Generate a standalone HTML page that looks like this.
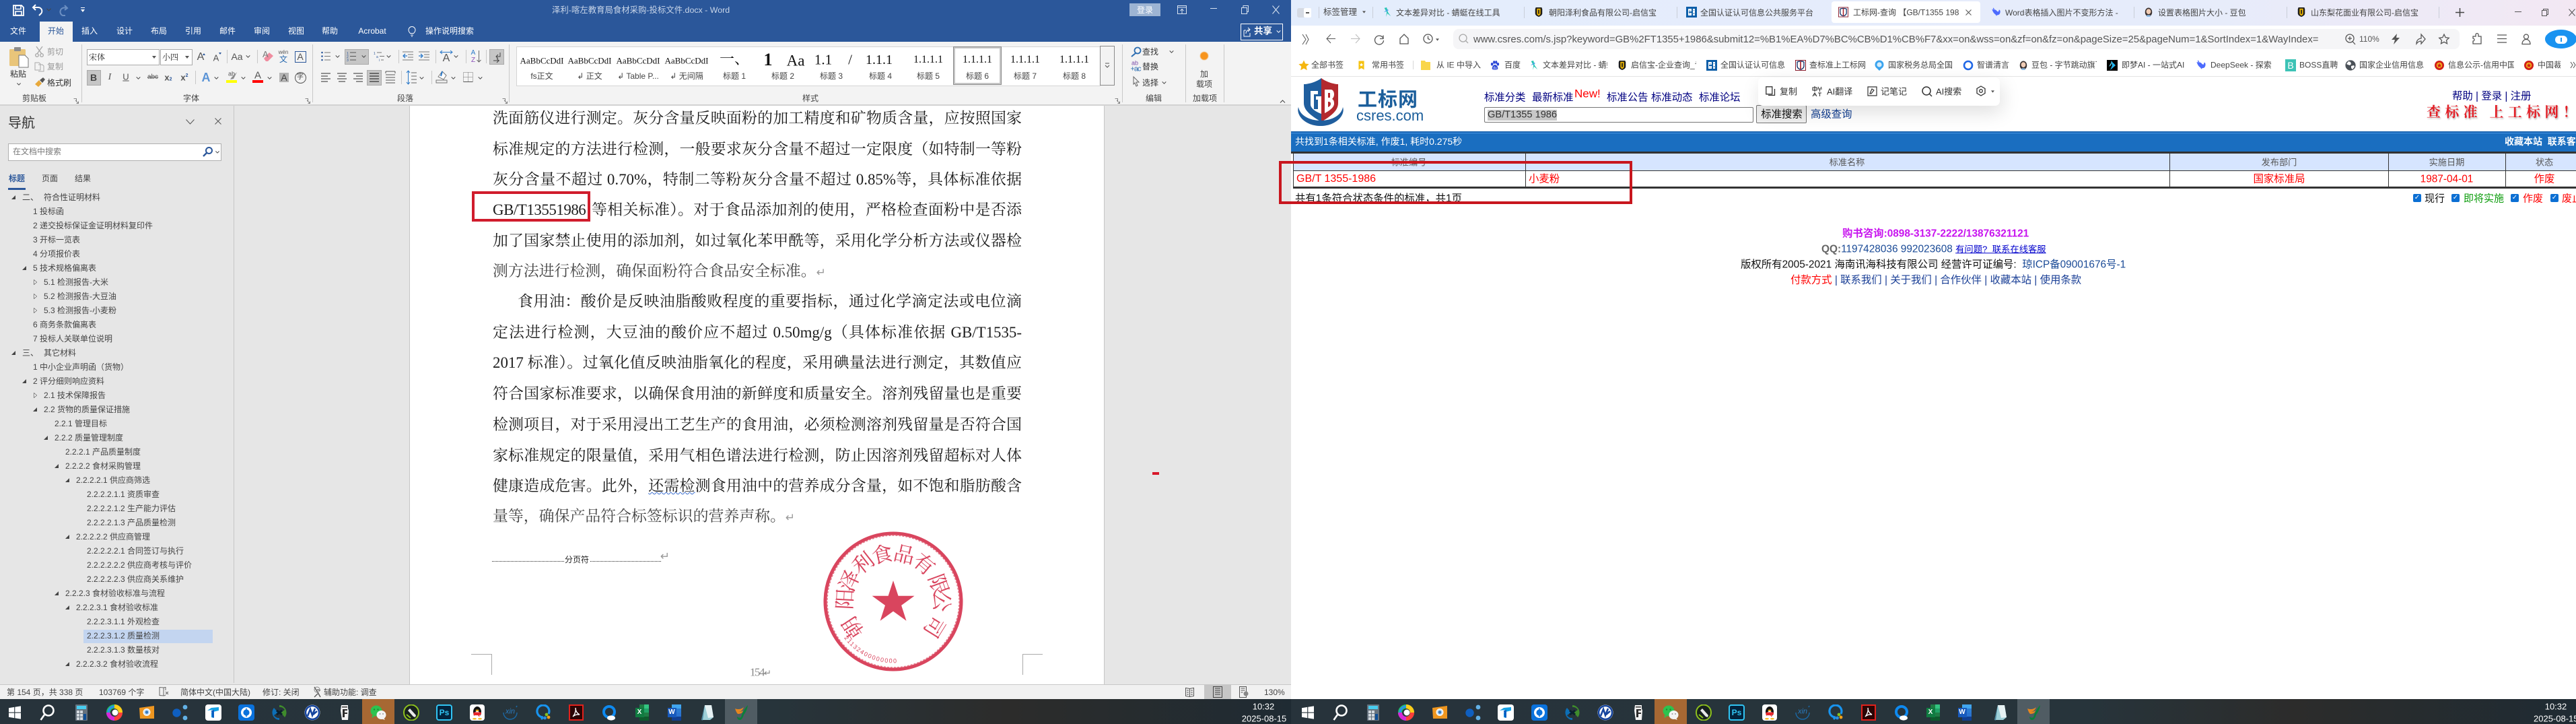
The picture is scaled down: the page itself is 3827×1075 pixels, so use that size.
<!DOCTYPE html>
<html lang="zh"><head><meta charset="utf-8"><title>Word and csres</title>
<style>
html,body{margin:0;padding:0;background:#fff}
#r{position:relative;width:3827px;height:1075px;overflow:hidden;background:#fff;font-family:"Liberation Sans","Noto Sans CJK SC",sans-serif;font-size:12px;color:#333}
.b{position:absolute}
.t{position:absolute;white-space:nowrap;line-height:1;transform:translateY(-50%)}
.c{position:absolute;white-space:nowrap;line-height:1;transform:translate(-50%,-50%)}
svg.i{position:absolute;overflow:visible}
.dl{position:absolute;left:732px;width:786px;white-space:nowrap;line-height:30px;height:30px;font-family:"Liberation Serif","Noto Serif CJK SC",serif;font-size:22.9px;color:#1c1c1c;text-align:justify;text-align-last:justify;transform:translateY(-50%)}
.dl.n{text-align:left;text-align-last:left;width:auto}
.m{color:#999;font-family:"DejaVu Sans",sans-serif;font-size:17px}
.n{color:#444}
.nt{position:absolute;white-space:nowrap;line-height:1;transform:translateY(-50%);font-size:12px;color:#444}
.tf{position:absolute;width:0;height:0;border-left:6px solid transparent;border-bottom:6px solid #444;transform:translateY(-50%)}
.to{position:absolute;width:5px;height:8px;transform:translateY(-50%)}
.w{color:#fff}
.sep{position:absolute;width:1px;background:#c8c8c8}
.lab{position:absolute;white-space:nowrap;line-height:1;transform:translate(-50%,-50%);font-size:12px;color:#444}
.pv{position:absolute;white-space:nowrap;line-height:1;transform:translate(-50%,-50%);font-family:"Liberation Serif","Noto Serif CJK SC",serif;color:#111;overflow:hidden}
.ar{position:absolute;width:5px;height:3px;transform:translate(-50%,-50%)}
.tab{position:absolute;white-space:nowrap;line-height:1;transform:translateY(-50%);color:#444;font-size:12px}
.tsep{position:absolute;top:10px;height:17px;width:1px;background:#c9ced8}
.bm{position:absolute;white-space:nowrap;line-height:1;transform:translateY(-50%);color:#444;font-size:12px;overflow:hidden;height:14px;padding-top:1px}
.nav{position:absolute;white-space:nowrap;line-height:1;transform:translateY(-50%);color:#000080;font-size:15.4px}
.th{position:absolute;white-space:nowrap;line-height:1;transform:translate(-50%,-50%);color:#555;font-size:13.2px}
.td{position:absolute;white-space:nowrap;line-height:1;transform:translate(-50%,-50%);color:#f00;font-size:15.4px}
.cb{position:absolute;top:288px;width:12px;height:12px;background:#0b6fd3;border-radius:2px;color:#fff;font-size:10px;line-height:12px;text-align:center;font-family:"DejaVu Sans",sans-serif}
.f{position:absolute;white-space:nowrap;line-height:1;transform:translateY(-50%);font-size:15.4px}
</style></head><body><div id="r">

<svg width="0" height="0" style="position:absolute">
<defs>
<symbol id="win" viewBox="0 0 24 24"><path d="M3 5.2l8.2-1.3V11.5H3zM12.3 3.7L21 2.4v9.1h-8.7zM3 12.6h8.2v7.5L3 18.8zM12.3 12.6H21v9l-8.7-1.3z" fill="#fff"/></symbol>
<symbol id="sr" viewBox="0 0 24 24"><circle cx="14" cy="9" r="7.5" fill="none" stroke="#fff" stroke-width="2.6"/><path d="M8.5 14.5L2.5 23" stroke="#fff" stroke-width="2.6" fill="none"/></symbol>
<symbol id="calc" viewBox="0 0 24 24"><rect x="3" width="18" height="24" rx="1" fill="#66727d"/><rect x="5" y="2" width="14" height="5" fill="#48cdf0"/><path d="M5 9h4v4H5zM10 9h4v4h-4zM5 14h4v4H5zM10 14h4v4h-4zM5 19h4v4H5zM10 19h4v4h-4z" fill="#d3d9de"/><rect x="15" y="14" width="4" height="9" fill="#0f4f96"/></symbol>
<symbol id="whl" viewBox="0 0 24 24"><circle cx="12" cy="12" r="9" fill="none" stroke="#21c16b" stroke-width="6"/><path d="M12 3a9 9 0 0 1 9 9" fill="none" stroke="#ffcc18" stroke-width="6"/><path d="M21 12a9 9 0 0 1-9 9" fill="none" stroke="#ff3f3a" stroke-width="6"/><path d="M12 21a9 9 0 0 1-9-9" fill="none" stroke="#d827d8" stroke-width="6"/><path d="M3 12a9 9 0 0 1 9-9" fill="none" stroke="#2a8df0" stroke-width="3"/><circle cx="13" cy="12" r="4.5" fill="#fff"/></symbol>
<symbol id="pho" viewBox="0 0 24 24"><path d="M1 5l22-3v19L2 21z" fill="#ee9620"/><circle cx="12" cy="11.5" r="5" fill="#cfe3f4" stroke="#fff"/><circle cx="12" cy="11.5" r="2.4" fill="#3a7dc0"/></symbol>
<symbol id="dts" viewBox="0 0 24 24"><circle cx="6.5" cy="12.5" r="6.2" fill="#0f5fc0"/><circle cx="19" cy="4" r="3.4" fill="#62b1e6"/><circle cx="19" cy="20" r="3.4" fill="#62b1e6"/></symbol>
<symbol id="tdo" viewBox="0 0 24 24"><rect width="24" height="24" rx="4" fill="#fff"/><path d="M3 9l8-1v4l-2 .5V19l3 1v-9l8-2V4L9 5z" fill="#14a2e6"/><path d="M9 9l4-1v12l-3-1.5z" fill="#0c5fc2"/></symbol>
<symbol id="rng" viewBox="0 0 24 24"><rect width="24" height="24" rx="4" fill="#0a72dc"/><circle cx="12" cy="12" r="6.3" fill="none" stroke="#fff" stroke-width="3.4"/><path d="M12 5.5v13" stroke="#0a72dc" stroke-width="1.4"/></symbol>
<symbol id="swr" viewBox="0 0 24 24"><path d="M12 1a11 11 0 0 1 8 18l-6-7 6-4a8 8 0 0 0-8-4z" fill="#3f8c2c"/><path d="M12 23A11 11 0 0 1 4 5l6 7-6 4a8 8 0 0 0 8 4z" fill="#0d6fb6"/><path d="M8 9l8 6M8 15l8-6" stroke="#0a1f2c" stroke-width="3"/></symbol>
<symbol id="nss" viewBox="0 0 24 24"><circle cx="12" cy="12" r="11.5" fill="#fff"/><circle cx="12" cy="12" r="10" fill="none" stroke="#15449e" stroke-width="2.5"/><path d="M5 17L9 7l3 9 4-10M13 15l6-5" stroke="#15449e" stroke-width="2.6" fill="none"/></symbol>
<symbol id="cup" viewBox="0 0 24 24"><path d="M7 1h10v5l1 3-1 14H8L6 9z" fill="#f3f3f3"/><path d="M9 7h7v2h-4v3h4v2h-4v5H9z" fill="#2b2b2b"/><path d="M8 3h8v1.5H8z" fill="#333"/></symbol>
<symbol id="wx" viewBox="0 0 24 24"><ellipse cx="9" cy="9.5" rx="8.5" ry="8" fill="#2dc34f"/><path d="M3 16l-.5 4 4-2.5z" fill="#2dc34f"/><circle cx="6" cy="7.5" r="1.2" fill="#1e8a36"/><circle cx="11.5" cy="7.5" r="1.2" fill="#1e8a36"/><ellipse cx="16.5" cy="15.5" rx="7" ry="6.5" fill="#f4f4f4"/><path d="M20 20l2 3-4.5-1.5z" fill="#f4f4f4"/><circle cx="14.5" cy="14" r="1" fill="#999"/><circle cx="19" cy="14" r="1" fill="#999"/></symbol>
<symbol id="pen" viewBox="0 0 24 24"><ellipse cx="12" cy="12" rx="11" ry="11.5" fill="#18211f" stroke="#8ec21d" stroke-width="2"/><path d="M7 9l3-3 9 10-1 3-3-1z" fill="#e9e9e9"/><path d="M5 15l6 5" stroke="#8ec21d" stroke-width="2"/></symbol>
<symbol id="ps" viewBox="0 0 24 24"><rect x="1" y="1" width="22" height="22" rx="3" fill="#03233d" stroke="#31c5f4" stroke-width="2"/></symbol>
<symbol id="qq" viewBox="0 0 24 24"><rect x="1" width="22" height="24" rx="4" fill="#fff"/><ellipse cx="12" cy="11" rx="6" ry="8" fill="#111"/><ellipse cx="12" cy="15" rx="4.2" ry="5.2" fill="#fff"/><path d="M6.6 11.5h10.8l.8 3-3 1.4v3l-2-2.8H6.5z" fill="#e8262a"/><ellipse cx="12" cy="8.8" rx="2.4" ry="1.2" fill="#f4b415"/><ellipse cx="8" cy="21.3" rx="3" ry="1.2" fill="#f4b415"/><ellipse cx="16" cy="21.3" rx="3" ry="1.2" fill="#f4b415"/></symbol>
<symbol id="xin" viewBox="0 0 24 24"><path d="M2 12a10 10 0 0 0 20 0" fill="none" stroke="#1a69a6" stroke-width="1.4"/><path d="M21 4l1-2" stroke="#1a69a6" stroke-width="1.6"/></symbol>
<symbol id="cht" viewBox="0 0 24 24"><path d="M12 19a9 9 0 1 1 8-5" fill="none" stroke="#1894ef" stroke-width="3.2"/><path d="M9 22l3-3" stroke="#1894ef" stroke-width="3"/><circle cx="17" cy="15" r="2.4" fill="#84c21f"/><circle cx="20" cy="19" r="2.4" fill="#f3a01a"/><circle cx="14.5" cy="20" r="2.4" fill="#2a8fe0"/></symbol>
<symbol id="adb" viewBox="0 0 24 24"><rect x="2" y="1" width="20" height="22" fill="#2b0505" stroke="#e2211c" stroke-width="2"/><path d="M7 18c3-3 5-9 4-13 0 4 2 8 6 10-4-.5-7 0-10 3z" fill="none" stroke="#fff" stroke-width="1.4"/></symbol>
<symbol id="blq" viewBox="0 0 24 24"><circle cx="12" cy="11" r="8" fill="none" stroke="#0e8af0" stroke-width="4"/><ellipse cx="15" cy="20" rx="6" ry="3.6" fill="#fff"/></symbol>
<symbol id="xl" viewBox="0 0 24 24"><path d="M8 0h14v24H8z" fill="#1f7c45"/><path d="M15 0h7v6h-7z" fill="#33c481"/><path d="M15 6h7v6h-7z" fill="#21a366"/><path d="M8 18h14v6H8z" fill="#0e5a2d"/><rect x="2" y="5" width="13" height="14" fill="#107c41"/></symbol>
<symbol id="wd" viewBox="0 0 24 24"><path d="M8 0h14v24H8z" fill="#2a73d0"/><path d="M8 0h14v6H8z" fill="#41a5ee"/><path d="M8 6h14v6H8z" fill="#2b7cd3"/><path d="M8 18h14v6H8z" fill="#103f91"/><rect x="2" y="5" width="13" height="14" fill="#185abd"/></symbol>
<symbol id="ntp" viewBox="0 0 24 24"><path d="M8 1h10l3 18-5 4H3z" fill="#9fd0d8"/><path d="M8 1h10l3 18-8 1z" fill="#e7f2f4"/><path d="M8 1L3 23l2 .6" fill="#4e8aa2"/></symbol>
<symbol id="ylw" viewBox="0 0 24 24"><path d="M3 6c4 2 10 1 13-2-2 5-5 7-9 7 3 0 6-.5 8-2-1 4-4 5-8 5-2-2-3-5-4-8z" fill="#e7861d"/><path d="M22 1c-1 7-4 12-6 14-1 4-3 8-6 8-3 0-4-3-4-5 2 2 4 2 6 1 1-5 5-13 10-18z" fill="#0b7f3a"/></symbol>
<symbol id="dfly" viewBox="0 0 16 16"><path d="M7 0l2 8 5 7-6-5-2 6 1-8-4-7z" fill="#25c4b4"/><path d="M9 3l-7 5 4-1 4-2z" fill="#4da6ea"/></symbol>
<symbol id="shd" viewBox="0 0 16 16"><path d="M3 0h10l1 3v7c0 3-3 5-6 6-3-1-6-3-6-6V3z" fill="#1d1d1d"/><path d="M5 2h6v8c0 2-1 3-3 4-2-1-3-2-3-4z" fill="#f1b800"/><path d="M7 4h2v7H7z" fill="#1d1d1d"/></symbol>
<symbol id="ccc" viewBox="0 0 16 16"><rect width="16" height="16" fill="#0c5ea8"/><path d="M3 3h5v4H4v2h4v4H3zM10 3h3v10h-3z" fill="#fff"/><path d="M5 5h1v1H5zM5 10h1v1H5zM11 5h1v1h-1zM11 9h1v2h-1z" fill="#0c5ea8"/></symbol>
<symbol id="gbi" viewBox="0 0 16 16"><rect x=".5" y=".5" width="15" height="15" fill="#fff" stroke="#8a1c2c"/><path d="M8 2c3 0 5 1 5 1v6c0 3-3 5-5 5s-5-2-5-5V3s2-1 5-1z" fill="none" stroke="#15356b" stroke-width="1.4"/><path d="M8 2v12" stroke="#a81e28" stroke-width="1.6"/></symbol>
<symbol id="gq" viewBox="0 0 16 16"><circle cx="8" cy="7" r="6.5" fill="#3aa4ef"/><circle cx="8" cy="7" r="3.6" fill="#d4ecfb"/><path d="M5 13h6l-3 3z" fill="#3aa4ef"/></symbol>
<symbol id="zp" viewBox="0 0 16 16"><circle cx="8" cy="8" r="6" fill="none" stroke="#1e66e6" stroke-width="2.6"/><path d="M4 9c3 2 6 1 8-3" stroke="#fff" stroke-width="1.6" fill="none"/></symbol>
<symbol id="dbi" viewBox="0 0 16 16"><ellipse cx="8" cy="8" rx="6" ry="7.5" fill="#3a3130"/><ellipse cx="8" cy="7" rx="4" ry="4.5" fill="#f1cdb6"/><path d="M5 13h6v3H5z" fill="#8fbde6"/></symbol>
<symbol id="jm" viewBox="0 0 16 16"><rect width="16" height="16" fill="#000"/><path d="M6 1l7 7-8 7 3-7z" fill="#22b5ef"/><path d="M6 8l-3 2 5-9z" fill="#6ddaef"/></symbol>
<symbol id="dsk" viewBox="0 0 16 16"><path d="M1 3c2 7 6 10 9 10 3 0 5-2 5-6 0-2-1-3-2-3l-1 3c-2 1-3-2-5-3C6 4 3 4 1 3z" fill="#4d6bfe"/><path d="M3 1c3 4 3 9 6 13" fill="none" stroke="#4d6bfe" stroke-width="1.4"/></symbol>
<symbol id="glb" viewBox="0 0 16 16"><circle cx="8" cy="8" r="7.6" fill="#4b5158"/><path d="M5 2l3 1 1 3-2 2-3-1-2-1zM9 9l4-1 1 2-3 4-2-2z" fill="#fff"/></symbol>
<symbol id="emb" viewBox="0 0 16 16"><circle cx="8" cy="8" r="7" fill="#d11f19"/><circle cx="8" cy="8" r="4.2" fill="#f2b51a"/><path d="M8 4.6l1 2.4 2.4.2-1.8 1.6.6 2.4L8 9.9 5.800 11.200l.6-2.400L4.600 7.200 7 7z" fill="#d11f19"/></symbol>
<symbol id="yst" viewBox="0 0 16 16"><path d="M8 .5l2.300 5 5.400.6-4 3.700 1.100 5.500L8 12.500l-4.800 2.800 1.100-5.500-4-3.700 5.400-.6z" fill="#f5b60f"/></symbol>
<symbol id="ybk" viewBox="0 0 16 16"><path d="M3 0h10v16l-5-3-5 3z" fill="#f5c211"/><path d="M8 3.500l1 2.200 2.300.2-1.700 1.500.5 2.300L8 8.600 5.900 9.700l.5-2.300L4.700 5.900 7 5.700z" fill="#fff"/></symbol>
<symbol id="fld" viewBox="0 0 16 16"><path d="M1 1h6l1 2h7v12H1z" fill="#f9d649"/></symbol>
<symbol id="bdu" viewBox="0 0 16 16"><ellipse cx="3" cy="6" rx="2" ry="2.600" fill="#2a46d6"/><ellipse cx="6.500" cy="2.800" rx="1.800" ry="2.600" fill="#2a46d6"/><ellipse cx="10" cy="2.800" rx="1.800" ry="2.600" fill="#2a46d6"/><ellipse cx="13" cy="6" rx="2" ry="2.600" fill="#2a46d6"/><path d="M8 7c3 0 5 4 5 6s-2 2.500-5 2.500S3 15 3 13s2-6 5-6z" fill="#2a46d6"/><text x="8" y="14" font-size="6" text-anchor="middle" fill="#fff" font-family="Liberation Sans">du</text></symbol>
<symbol id="tri" viewBox="0 0 5 8"><path d="M.5.5l4 3.500-4 3.500z" fill="#fff" stroke="#666" stroke-width=".8"/></symbol>
<symbol id="dn" viewBox="0 0 8 5"><path d="M.5.500L4 4 7.500.500" fill="none" stroke="#444" stroke-width="1.200"/></symbol>
<symbol id="dnb" viewBox="0 0 6 4"><path d="M0 0h6L3 4z" fill="#555"/></symbol>
<symbol id="lf" viewBox="0 0 8 8"><path d="M.5.500h4v4M7.500 7.500L3 3M7.500 4.500v3h-3" fill="none" stroke="#666" stroke-width=".8"/></symbol>
<symbol id="al" viewBox="0 0 16 16"><path d="M1 2h14M1 6h10M1 10h14M1 14h10" stroke="#555" stroke-width="1.200" fill="none"/></symbol>
<symbol id="ac" viewBox="0 0 16 16"><path d="M1 2h14M3 6h10M1 10h14M3 14h10" stroke="#555" stroke-width="1.200" fill="none"/></symbol>
<symbol id="ar" viewBox="0 0 16 16"><path d="M1 2h14M5 6h10M1 10h14M5 14h10" stroke="#555" stroke-width="1.200" fill="none"/></symbol>
<symbol id="aj" viewBox="0 0 16 16"><path d="M1 2h14M1 6h14M1 10h14M1 14h14" stroke="#333" stroke-width="1.200" fill="none"/></symbol>
</defs>
</svg>

<!-- WORD title + tabs -->
<div class="b" style="left:0;top:0;width:1918px;height:62px;background:#2b579a"></div>
<svg class="i" style="left:19px;top:7px" width="17" height="17" viewBox="0 0 17 17"><path d="M1 1h12l3 3v12H1z" fill="none" stroke="#fff" stroke-width="1.800"/><path d="M4 1.500h8v5H4zM4 10h9v5.500H4z" fill="none" stroke="#fff" stroke-width="1.600"/></svg>
<svg class="i" style="left:48px;top:6px" width="16" height="18" viewBox="0 0 16 18"><path d="M5 1L1 5l4 4M1 5h8a5.500 5.500 0 0 1 3 10l-2 2" fill="none" stroke="#fff" stroke-width="2"/></svg>
<svg class="i" style="left:69px;top:12px" width="7" height="5"><use href="#dn"/></svg>
<svg class="i" style="left:87px;top:7px" width="15" height="17" viewBox="0 0 15 17"><path d="M9 1l4 4-4 3M11 5a6 6 0 1 0-5 11h4" fill="none" stroke="#6b8fc2" stroke-width="2"/></svg>
<div class="b" style="left:120px;top:11px;width:6px;height:1px;background:#fff"></div>
<svg class="i" style="left:120px;top:14px" width="6" height="4" viewBox="0 0 6 4"><path d="M0 0h6L3 4z" fill="#fff"/></svg>
<div class="t" style="left:820px;top:15px;color:#c9d6e9;font-size:12.400px">泽利-喀左教育局食材采购-投标文件.docx  -  Word</div>
<div class="b" style="left:1678px;top:5px;width:46px;height:19px;background:#9db4d3"></div>
<div class="c" style="left:1701px;top:15px;color:#fff;font-size:12px">登录</div>
<svg class="i" style="left:1749px;top:8px" width="14" height="13" viewBox="0 0 14 13"><path d="M.5.500h13v12H.5zM.5 3h13M7 12V6M4.500 8L7 5.500 9.500 8" fill="none" stroke="#d9e3f0"/></svg>
<div class="b" style="left:1798px;top:12px;width:10px;height:1px;background:#d9e3f0"></div>
<svg class="i" style="left:1844px;top:8px" width="11" height="13" viewBox="0 0 11 13"><path d="M.5 3.500h8v9h-8zM3 3V.5h7.500v9H9" fill="none" stroke="#d9e3f0"/></svg>
<svg class="i" style="left:1890px;top:8px" width="11" height="13" viewBox="0 0 11 13"><path d="M.5.500l10 12M10.500.500L.5 12.500" fill="none" stroke="#d9e3f0"/></svg>

<div class="b" style="left:59px;top:32px;width:49px;height:30px;background:#f3f3f3"></div>
<div class="c w" style="left:27px;top:46px">文件</div>
<div class="c" style="left:83px;top:46px;color:#2b579a">开始</div>
<div class="c w" style="left:133px;top:46px">插入</div>
<div class="c w" style="left:185px;top:46px">设计</div>
<div class="c w" style="left:236px;top:46px">布局</div>
<div class="c w" style="left:287px;top:46px">引用</div>
<div class="c w" style="left:338px;top:46px">邮件</div>
<div class="c w" style="left:389px;top:46px">审阅</div>
<div class="c w" style="left:440px;top:46px">视图</div>
<div class="c w" style="left:490px;top:46px">帮助</div>
<div class="c w" style="left:553px;top:46px">Acrobat</div>
<svg class="i" style="left:606px;top:38px" width="12" height="17" viewBox="0 0 12 17"><path d="M3.500 11.500C2 10 1 8.500 1 6.500a5 5 0 0 1 10 0c0 2-1 3.500-2.500 5zM4 14h4M5 16h2" fill="none" stroke="#fff"/></svg>
<div class="t w" style="left:632px;top:46px">操作说明搜索</div>
<div class="b" style="left:1843px;top:35px;width:61px;height:23px;border:1px solid #fff"></div>
<svg class="i" style="left:1847px;top:40px" width="12" height="15" viewBox="0 0 12 15"><path d="M1 5h3M1 5v9h9V9M4 10c0-4 3-6 6-6M7 1l3 3-3 3" fill="none" stroke="#fff"/></svg>
<div class="t w" style="left:1863px;top:46px;font-weight:bold;font-size:13.500px">共享</div>
<svg class="i" style="left:1896px;top:45px" width="7" height="4" viewBox="0 0 8 5"><path d="M.5.500L4 4 7.500.500" fill="none" stroke="#fff" stroke-width="1.200"/></svg>

<!-- Ribbon -->
<div class="b" style="left:0;top:62px;width:1918px;height:93px;background:#f3f3f3"></div>
<div class="b" style="left:0;top:155px;width:1918px;height:2px;background:#d2d2d2"></div>
<div class="sep" style="left:121px;top:66px;height:86px"></div>
<div class="sep" style="left:464px;top:66px;height:86px"></div>
<div class="sep" style="left:756px;top:66px;height:86px"></div>
<div class="sep" style="left:1667px;top:66px;height:86px"></div>
<div class="sep" style="left:1761px;top:66px;height:86px"></div>
<div class="sep" style="left:1818px;top:66px;height:86px"></div>

<svg class="i" style="left:14px;top:69px" width="30" height="31" viewBox="0 0 30 31"><rect y="4" width="24" height="25" rx="1.500" fill="#e9c57a"/><rect x="7" y="1" width="10" height="6" rx="1" fill="#8c8c8c"/><path d="M14 13h9l5 5v13H14z" fill="#fff" stroke="#777"/></svg>
<div class="c" style="left:27px;top:110px;color:#333">粘贴</div>
<svg class="i" style="left:25px;top:123px" width="6" height="4"><use href="#dn"/></svg>
<svg class="i" style="left:52px;top:68px" width="13" height="17" viewBox="0 0 13 17"><path d="M2 1l8 11M11 1L3 12" stroke="#aaa" stroke-width="1.400" fill="none"/><circle cx="3" cy="14" r="2.300" fill="none" stroke="#aaa" stroke-width="1.400"/><circle cx="10" cy="14" r="2.300" fill="none" stroke="#aaa" stroke-width="1.400"/></svg>
<div class="t" style="left:70px;top:77px;color:#999">剪切</div>
<svg class="i" style="left:51px;top:92px" width="15" height="15" viewBox="0 0 15 15"><path d="M1 1h6l2 2v9H1zM6 4h6l2 2v8H6" fill="#f3f3f3" stroke="#aaa"/></svg>
<div class="t" style="left:70px;top:99px;color:#999">复制</div>
<svg class="i" style="left:51px;top:115px" width="16" height="15" viewBox="0 0 16 15"><path d="M1 10l6-6 4 5-5 5z" fill="#e8a93c"/><path d="M8 4l5-4 3 3-4 5z" fill="#555"/></svg>
<div class="t" style="left:70px;top:123px;color:#333">格式刷</div>
<div class="lab" style="left:51px;top:146px">剪贴板</div>
<svg class="i" style="left:109px;top:146px" width="8" height="8"><use href="#lf"/></svg>

<div class="b" style="left:129px;top:73px;width:106px;height:22px;background:#fff;border:1px solid #ababab"></div>
<div class="t" style="left:132px;top:85px;color:#222;font-family:'Liberation Serif','Noto Serif CJK SC',serif">宋体</div>
<svg class="i" style="left:226px;top:83px" width="6" height="4"><use href="#dnb"/></svg>
<div class="b" style="left:238px;top:73px;width:46px;height:22px;background:#fff;border:1px solid #ababab"></div>
<div class="t" style="left:241px;top:85px;color:#222;font-family:'Liberation Serif','Noto Serif CJK SC',serif">小四</div>
<svg class="i" style="left:275px;top:83px" width="6" height="4"><use href="#dnb"/></svg>
<div class="c" style="left:298px;top:85px;font-size:16px;color:#555">A</div>
<div class="b" style="left:301px;top:77px;width:0;height:0;border:2px solid transparent;border-bottom:3px solid #2b579a"></div>
<div class="c" style="left:321px;top:86px;font-size:13px;color:#555">A</div>
<div class="b" style="left:325px;top:78px;width:0;height:0;border:2px solid transparent;border-top:3px solid #2b579a"></div>
<div class="sep" style="left:337px;top:74px;height:20px"></div>
<div class="c" style="left:352px;top:84px;font-size:14px;color:#555">Aa</div>
<svg class="i" style="left:365px;top:82px" width="7" height="4"><use href="#dn"/></svg>
<div class="sep" style="left:382px;top:74px;height:20px"></div>
<svg class="i" style="left:389px;top:75px" width="18" height="18" viewBox="0 0 18 18"><path d="M3 12L11 3l6 5-8 8H6z" fill="#f08da0"/><text x="1" y="10" font-size="13" fill="#777" font-family="Liberation Sans">A</text></svg>
<div class="c" style="left:421px;top:78px;font-size:8px;color:#555">wén</div>
<div class="c" style="left:421px;top:88px;font-size:12px;color:#2b6cb0">文</div>
<div class="b" style="left:438px;top:76px;width:15px;height:15px;border:1px solid #2b579a"></div>
<div class="c" style="left:446px;top:84px;font-size:14px;color:#555">A</div>

<div class="b" style="left:129px;top:104px;width:21px;height:23px;background:#c6c6c6;box-sizing:border-box;border:1px solid #aaa"></div>
<div class="c" style="left:139px;top:115px;font-weight:bold;font-size:14px;color:#444">B</div>
<div class="c" style="left:163px;top:115px;font-style:italic;font-size:14px;color:#555;font-family:'Liberation Serif'">I</div>
<div class="c" style="left:187px;top:114px;font-size:13px;color:#555;text-decoration:underline">U</div>
<svg class="i" style="left:202px;top:114px" width="7" height="4"><use href="#dn"/></svg>
<div class="c" style="left:227px;top:115px;font-size:10px;color:#555;text-decoration:line-through">abc</div>
<div class="c" style="left:250px;top:115px;font-size:13px;color:#555;font-weight:bold">x<span style="font-size:7px;color:#2b579a">2</span></div>
<div class="c" style="left:274px;top:115px;font-size:13px;color:#555;font-weight:bold">x<sup style="font-size:7px;color:#2b579a;line-height:0">2</sup></div>
<div class="sep" style="left:290px;top:105px;height:20px"></div>
<div class="c" style="left:306px;top:115px;font-size:18px;color:#5b94d6;font-weight:bold">A</div>
<svg class="i" style="left:318px;top:114px" width="7" height="4"><use href="#dn"/></svg>
<div class="c" style="left:344px;top:110px;font-size:9px;color:#555">ab</div>
<svg class="i" style="left:340px;top:105px" width="14" height="14" viewBox="0 0 14 14"><path d="M2 13l2-3 8-8-5 10z" fill="#8c8c8c"/></svg>
<div class="b" style="left:336px;top:119px;width:16px;height:4px;background:#ffff00"></div>
<svg class="i" style="left:358px;top:114px" width="7" height="4"><use href="#dn"/></svg>
<div class="c" style="left:383px;top:112px;font-size:15px;color:#555">A</div>
<div class="b" style="left:375px;top:119px;width:16px;height:4px;background:#ff0000"></div>
<svg class="i" style="left:397px;top:114px" width="7" height="4"><use href="#dn"/></svg>
<div class="b" style="left:415px;top:108px;width:14px;height:14px;background:#b4b4b4"></div>
<div class="c" style="left:422px;top:115px;font-size:14px;color:#444">A</div>
<div class="b" style="left:438px;top:107px;width:15px;height:15px;border:1px solid #555;border-radius:50%"></div>
<div class="c" style="left:446px;top:115px;font-size:10px;color:#444">字</div>
<div class="lab" style="left:284px;top:146px">字体</div>
<svg class="i" style="left:453px;top:146px" width="8" height="8"><use href="#lf"/></svg>

<svg class="i" style="left:477px;top:76px" width="14" height="15" viewBox="0 0 14 15"><path d="M5 2h9M5 7.500h9M5 13h9" stroke="#777"/><circle cx="1.500" cy="2" r="1.300" fill="#2b579a"/><circle cx="1.500" cy="7.500" r="1.300" fill="#2b579a"/><circle cx="1.500" cy="13" r="1.300" fill="#2b579a"/></svg>
<svg class="i" style="left:498px;top:82px" width="7" height="4"><use href="#dn"/></svg>
<div class="b" style="left:512px;top:73px;width:36px;height:23px;background:#c6c6c6;box-sizing:border-box;border:1px solid #aaa"></div>
<svg class="i" style="left:515px;top:76px" width="14" height="15" viewBox="0 0 14 15"><path d="M5 2h9M5 7.500h9M5 13h9" stroke="#555"/><text x="0" y="5" font-size="5" fill="#2b579a">1</text><text x="0" y="10" font-size="5" fill="#2b579a">2</text><text x="0" y="15" font-size="5" fill="#2b579a">3</text></svg>
<svg class="i" style="left:537px;top:82px" width="7" height="4"><use href="#dn"/></svg>
<svg class="i" style="left:555px;top:76px" width="16" height="15" viewBox="0 0 16 15"><path d="M5 2h7M9 7.500h7M11 13h4" stroke="#777"/><text x="0" y="5" font-size="5" fill="#2b579a">1</text><text x="4" y="10" font-size="5" fill="#2b579a">a</text><text x="8" y="15" font-size="5" fill="#2b579a">i</text></svg>
<svg class="i" style="left:574px;top:82px" width="7" height="4"><use href="#dn"/></svg>
<div class="sep" style="left:592px;top:74px;height:20px"></div>
<svg class="i" style="left:598px;top:76px" width="16" height="15" viewBox="0 0 16 15"><path d="M0 1h16M8 5h8M8 9h8M0 13h16" stroke="#777"/><path d="M7 7H1M4 4L1 7l3 3" stroke="#2b79c9" stroke-width="1.300" fill="none"/></svg>
<svg class="i" style="left:622px;top:76px" width="16" height="15" viewBox="0 0 16 15"><path d="M0 1h16M8 5h8M8 9h8M0 13h16" stroke="#777"/><path d="M0 7h6M3 4l3 3-3 3" stroke="#2b79c9" stroke-width="1.300" fill="none"/></svg>
<div class="sep" style="left:647px;top:74px;height:20px"></div>
<div class="c" style="left:663px;top:87px;font-size:16px;color:#555">A</div>
<svg class="i" style="left:653px;top:74px" width="20" height="7" viewBox="0 0 20 7"><path d="M1 3.500h18M4 1L1 3.500 4 6M16 1l3 2.500L16 6" stroke="#2b79c9" fill="none"/></svg>
<svg class="i" style="left:674px;top:82px" width="7" height="4"><use href="#dn"/></svg>
<div class="sep" style="left:692px;top:74px;height:20px"></div>
<div class="c" style="left:703px;top:79px;font-size:10px;color:#2b79c9">A</div>
<div class="c" style="left:703px;top:90px;font-size:10px;color:#8a4fb8">Z</div>
<svg class="i" style="left:708px;top:75px" width="7" height="18" viewBox="0 0 7 18"><path d="M3.500 0v17M.5 14l3 3 3-3" stroke="#666" fill="none"/></svg>
<div class="sep" style="left:722px;top:74px;height:20px"></div>
<div class="b" style="left:727px;top:73px;width:22px;height:23px;background:#c6c6c6;box-sizing:border-box;border:1px solid #aaa"></div>
<svg class="i" style="left:732px;top:76px" width="12" height="17" viewBox="0 0 12 17"><path d="M11 2v6H5M8 5L5 8l3 3M1 14h9M6 11l3 3-3 3" stroke="#444" fill="none"/></svg>
<svg class="i" style="left:476px;top:107px" width="16" height="16"><use href="#al"/></svg>
<svg class="i" style="left:500px;top:107px" width="16" height="16"><use href="#ac"/></svg>
<svg class="i" style="left:524px;top:107px" width="16" height="16"><use href="#ar"/></svg>
<div class="b" style="left:545px;top:104px;width:22px;height:23px;background:#c6c6c6;box-sizing:border-box;border:1px solid #aaa"></div>
<svg class="i" style="left:548px;top:107px" width="16" height="16"><use href="#aj"/></svg>
<svg class="i" style="left:572px;top:105px" width="16" height="20" viewBox="0 0 16 20"><path d="M1 6h14M1 10h14M1 14h14M1 18h14M1 1h14M1 1v3M15 1v3" stroke="#555" fill="none"/></svg>
<div class="sep" style="left:596px;top:105px;height:20px"></div>
<svg class="i" style="left:603px;top:104px" width="16" height="22" viewBox="0 0 16 22"><path d="M8 4h8M8 9h8M8 14h8M8 19h8" stroke="#666"/><path d="M3.500 1v20M1 4l2.500-3L6 4M1 18l2.500 3L6 18" stroke="#2b79c9" fill="none"/></svg>
<svg class="i" style="left:623px;top:114px" width="7" height="4"><use href="#dn"/></svg>
<div class="sep" style="left:641px;top:105px;height:20px"></div>
<svg class="i" style="left:648px;top:104px" width="17" height="20" viewBox="0 0 17 20"><path d="M3 10l6-8 6 6-4 6z" fill="#fff" stroke="#777"/><path d="M9 2l-2 7" stroke="#2b79c9" stroke-width="2"/><rect y="15" width="16" height="4" fill="#eee" stroke="#777"/></svg>
<svg class="i" style="left:670px;top:114px" width="7" height="4"><use href="#dn"/></svg>
<svg class="i" style="left:688px;top:107px" width="15" height="15" viewBox="0 0 15 15"><path d="M.5.500h14v14H.5zM7.500.500v14M.5 7.500h14" stroke="#777" stroke-dasharray="1 1" fill="none"/><path d="M.5 14.500h14" stroke="#555"/></svg>
<svg class="i" style="left:710px;top:114px" width="7" height="4"><use href="#dn"/></svg>
<div class="lab" style="left:602px;top:146px">段落</div>
<svg class="i" style="left:746px;top:146px" width="8" height="8"><use href="#lf"/></svg>

<!-- styles gallery -->
<div class="b" style="left:767px;top:69px;width:867px;height:57px;background:#fff;border-top:1px solid #d4d4d4;border-bottom:1px solid #d4d4d4;border-left:1px solid #d4d4d4"></div>
<div class="b" style="left:1634px;top:68px;width:22px;height:59px;box-sizing:border-box;border:1px solid #8a8a8a;background:#f3f3f3"></div>
<svg class="i" style="left:1641px;top:93px" width="8" height="10" viewBox="0 0 8 10"><path d="M1 1h6M1 4l3 3 3-3" stroke="#555" fill="none"/></svg>
<div class="b" style="left:1416px;top:69px;width:72px;height:57px;box-sizing:border-box;border:3px solid #c6c6c6;outline:1px solid #8a8a8a;outline-offset:-1px"></div>
<div class="pv" style="left:805px;top:90px;font-size:13px">AaBbCcDdI</div>
<div class="pv" style="left:876px;top:90px;font-size:13px">AaBbCcDdI</div>
<div class="pv" style="left:948px;top:90px;font-size:13px">AaBbCcDdI</div>
<div class="pv" style="left:1020px;top:90px;font-size:13px">AaBbCcDdI</div>
<div class="pv" style="left:1091px;top:88px;font-size:22px">一、</div>
<div class="pv" style="left:1141px;top:89px;font-size:26px;font-weight:bold">1</div>
<div class="pv" style="left:1182px;top:90px;font-size:23px">Aa</div>
<div class="pv" style="left:1223px;top:89px;font-size:21px">1.1</div>
<div class="pv" style="left:1263px;top:89px;font-size:21px">/</div>
<div class="pv" style="left:1306px;top:89px;font-size:20px">1.1.1</div>
<div class="pv" style="left:1379px;top:89px;font-size:16px">1.1.1.1</div>
<div class="pv" style="left:1452px;top:89px;font-size:16px">1.1.1.1</div>
<div class="pv" style="left:1523px;top:89px;font-size:16px">1.1.1.1</div>
<div class="pv" style="left:1596px;top:89px;font-size:16px">1.1.1.1</div>
<div class="lab" style="left:805px;top:113px">fs正文</div>
<div class="lab" style="left:876px;top:113px">↲ 正文</div>
<div class="lab" style="left:948px;top:113px">↲ Table P...</div>
<div class="lab" style="left:1020px;top:113px">↲ 无间隔</div>
<div class="lab" style="left:1091px;top:113px">标题 1</div>
<div class="lab" style="left:1163px;top:113px">标题 2</div>
<div class="lab" style="left:1235px;top:113px">标题 3</div>
<div class="lab" style="left:1308px;top:113px">标题 4</div>
<div class="lab" style="left:1379px;top:113px">标题 5</div>
<div class="lab" style="left:1452px;top:113px">标题 6</div>
<div class="lab" style="left:1523px;top:113px">标题 7</div>
<div class="lab" style="left:1596px;top:113px">标题 8</div>
<div class="lab" style="left:1204px;top:146px">样式</div>
<svg class="i" style="left:1656px;top:146px" width="8" height="8"><use href="#lf"/></svg>

<!-- editing -->
<svg class="i" style="left:1680px;top:69px" width="16" height="16" viewBox="0 0 16 16"><circle cx="10" cy="6" r="4.500" fill="none" stroke="#2b6cb0" stroke-width="1.800"/><path d="M7 10l-6 5" stroke="#2b6cb0" stroke-width="2"/></svg>
<div class="t" style="left:1697px;top:77px;color:#333">查找</div>
<svg class="i" style="left:1737px;top:75px" width="7" height="4"><use href="#dn"/></svg>
<div class="c" style="left:1686px;top:94px;font-size:9px;color:#7a4ba8">ab</div>
<div class="c" style="left:1687px;top:103px;font-size:11px;color:#2b6cb0;letter-spacing:-1px">+ac</div>
<div class="t" style="left:1697px;top:99px;color:#333">替换</div>
<svg class="i" style="left:1683px;top:113px" width="10" height="16" viewBox="0 0 10 16"><path d="M1 1l8 8H5l2 5-2 1-2-5-2 2z" fill="#f3f3f3" stroke="#666"/></svg>
<div class="t" style="left:1697px;top:123px;color:#333">选择</div>
<svg class="i" style="left:1726px;top:121px" width="7" height="4"><use href="#dn"/></svg>
<div class="lab" style="left:1714px;top:146px">编辑</div>
<div class="b" style="left:1783px;top:77px;width:12px;height:12px;border-radius:50%;background:#f7941d;filter:blur(.6px)"></div>
<div class="lab" style="left:1789px;top:110px">加</div>
<div class="lab" style="left:1789px;top:125px">载项</div>
<div class="lab" style="left:1790px;top:146px">加载项</div>
<svg class="i" style="left:1901px;top:148px" width="9" height="5" viewBox="0 0 8 5"><path d="M.5 4.500L4 1l3.500 3.500" fill="none" stroke="#444"/></svg>

<!-- Word body -->
<div class="b" style="left:0;top:157px;width:1918px;height:859px;background:#e6e6e6"></div>
<div class="b" style="left:347px;top:157px;width:1px;height:857px;background:#c6c6c6"></div>
<div class="b" style="left:608px;top:157px;width:1033px;height:859px;background:#fff;border-left:1px solid #c6c6c6;border-right:1px solid #c6c6c6;box-sizing:border-box"></div>

<!-- nav pane -->
<div class="t" style="left:12px;top:183px;font-size:20px;color:#333">导航</div>
<svg class="i" style="left:276px;top:177px" width="13" height="8" viewBox="0 0 13 8"><path d="M.5.500L6.500 7l6-6.500" fill="none" stroke="#555"/></svg>
<svg class="i" style="left:319px;top:175px" width="10" height="10" viewBox="0 0 10 10"><path d="M.5.500l9 9M9.500.500l-9 9" fill="none" stroke="#555"/></svg>
<div class="b" style="left:12px;top:213px;width:317px;height:26px;box-sizing:border-box;background:#fff;border:1px solid #b0b0b0"></div>
<div class="t" style="left:19px;top:225px;color:#7a7a7a">在文档中搜索</div>
<svg class="i" style="left:301px;top:218px" width="15" height="15" viewBox="0 0 15 15"><circle cx="9.500" cy="5.500" r="4.500" fill="none" stroke="#2b579a" stroke-width="2"/><path d="M6 9l-5 5" stroke="#2b579a" stroke-width="2.400"/></svg>
<svg class="i" style="left:320px;top:224px" width="6" height="4"><use href="#dn"/></svg>
<div class="t" style="left:13px;top:265px;color:#2b579a;font-weight:bold">标题</div>
<div class="t" style="left:62px;top:265px;color:#444">页面</div>
<div class="t" style="left:111px;top:265px;color:#444">结果</div>
<div class="b" style="left:12px;top:279px;width:26px;height:3px;background:#2b579a"></div>

<div class="b" style="left:124px;top:935px;width:192px;height:20px;background:#c3d5f0"></div>

<span class="tf" style="left:17px;top:293px"></span><div class="nt" style="left:33px;top:293px">二、<span style="margin-left:8px">符合性证明材料</span></div>
<div class="nt" style="left:49px;top:314px">1 投标函</div>
<div class="nt" style="left:49px;top:335px">2 递交投标保证金证明材料复印件</div>
<div class="nt" style="left:49px;top:356px">3 开标一览表</div>
<div class="nt" style="left:49px;top:377px">4 分项报价表</div>
<span class="tf" style="left:33px;top:398px"></span><div class="nt" style="left:49px;top:398px">5 技术规格偏离表</div>
<svg class="to" style="left:50px;top:419px"><use href="#tri"/></svg><div class="nt" style="left:65px;top:419px">5.1  检测报告-大米</div>
<svg class="to" style="left:50px;top:440px"><use href="#tri"/></svg><div class="nt" style="left:65px;top:440px">5.2  检测报告-大豆油</div>
<svg class="to" style="left:50px;top:461px"><use href="#tri"/></svg><div class="nt" style="left:65px;top:461px">5.3  检测报告-小麦粉</div>
<div class="nt" style="left:49px;top:482px">6 商务条款偏离表</div>
<div class="nt" style="left:49px;top:503px">7 投标人关联单位说明</div>
<span class="tf" style="left:17px;top:524px"></span><div class="nt" style="left:33px;top:524px">三、<span style="margin-left:8px">其它材料</span></div>
<div class="nt" style="left:49px;top:545px">1 中小企业声明函（货物）</div>
<span class="tf" style="left:33px;top:566px"></span><div class="nt" style="left:49px;top:566px">2 评分细则响应资料</div>
<svg class="to" style="left:50px;top:587px"><use href="#tri"/></svg><div class="nt" style="left:65px;top:587px">2.1  技术保障报告</div>
<span class="tf" style="left:49px;top:608px"></span><div class="nt" style="left:65px;top:608px">2.2  货物的质量保证措施</div>
<div class="nt" style="left:81px;top:629px">2.2.1  管理目标</div>
<span class="tf" style="left:65px;top:650px"></span><div class="nt" style="left:81px;top:650px">2.2.2  质量管理制度</div>
<div class="nt" style="left:97px;top:671px">2.2.2.1  产品质量制度</div>
<span class="tf" style="left:81px;top:692px"></span><div class="nt" style="left:97px;top:692px">2.2.2.2  食材采购管理</div>
<span class="tf" style="left:97px;top:713px"></span><div class="nt" style="left:113px;top:713px">2.2.2.2.1  供应商筛选</div>
<div class="nt" style="left:129px;top:734px">2.2.2.2.1.1  资质审查</div>
<div class="nt" style="left:129px;top:755px">2.2.2.2.1.2  生产能力评估</div>
<div class="nt" style="left:129px;top:776px">2.2.2.2.1.3  产品质量检测</div>
<span class="tf" style="left:97px;top:797px"></span><div class="nt" style="left:113px;top:797px">2.2.2.2.2  供应商管理</div>
<div class="nt" style="left:129px;top:818px">2.2.2.2.2.1  合同签订与执行</div>
<div class="nt" style="left:129px;top:839px">2.2.2.2.2.2  供应商考核与评价</div>
<div class="nt" style="left:129px;top:860px">2.2.2.2.2.3  供应商关系维护</div>
<span class="tf" style="left:81px;top:881px"></span><div class="nt" style="left:97px;top:881px">2.2.2.3  食材验收标准与流程</div>
<span class="tf" style="left:97px;top:902px"></span><div class="nt" style="left:113px;top:902px">2.2.2.3.1  食材验收标准</div>
<div class="nt" style="left:129px;top:923px">2.2.2.3.1.1  外观检查</div>
<div class="nt" style="left:129px;top:944px">2.2.2.3.1.2  质量检测</div>
<div class="nt" style="left:129px;top:965px">2.2.2.3.1.3  数量核对</div>
<span class="tf" style="left:97px;top:986px"></span><div class="nt" style="left:113px;top:986px">2.2.2.3.2  食材验收流程</div>

<!-- document text -->
<div class="dl" style="top:176px">洗面筋仪进行测定。灰分含量反映面粉的加工精度和矿物质含量，应按照国家</div>
<div class="dl" style="top:222px">标准规定的方法进行检测，一般要求灰分含量不超过一定限度（如特制一等粉</div>
<div class="dl" style="top:267px">灰分含量不超过 0.70%，特制二等粉灰分含量不超过 0.85%等，具体标准依据</div>
<div class="dl" style="top:312px;left:732px;width:139px;text-align:left;text-align-last:left;letter-spacing:-.45px">GB/T13551986</div>
<div class="dl" style="top:312px;left:879px;width:639px">等相关标准）。对于食品添加剂的使用，严格检查面粉中是否添</div>
<div class="dl" style="top:358px">加了国家禁止使用的添加剂，如过氧化苯甲酰等，采用化学分析方法或仪器检</div>
<div class="dl n" style="top:403px">测方法进行检测，确保面粉符合食品安全标准。<span class="m">↵</span></div>
<div class="dl" style="top:448px;left:769px;width:749px">食用油：酸价是反映油脂酸败程度的重要指标，通过化学滴定法或电位滴</div>
<div class="dl" style="top:494px">定法进行检测，大豆油的酸价应不超过 0.50mg/g（具体标准依据 GB/T1535-</div>
<div class="dl" style="top:539px">2017 标准）。过氧化值反映油脂氧化的程度，采用碘量法进行测定，其数值应</div>
<div class="dl" style="top:585px">符合国家标准要求，以确保食用油的新鲜度和质量安全。溶剂残留量也是重要</div>
<div class="dl" style="top:631px">检测项目，对于采用浸出工艺生产的食用油，必须检测溶剂残留量是否符合国</div>
<div class="dl" style="top:677px">家标准规定的限量值，采用气相色谱法进行检测，防止因溶剂残留超标对人体</div>
<div class="dl" style="top:722px">健康造成危害。此外，<span style="text-decoration:underline wavy #3b6fd0 1px">还需检</span>测食用油中的营养成分含量，如不饱和脂肪酸含</div>
<div class="dl n" style="top:767px">量等，确保产品符合标签标识的营养声称。<span class="m">↵</span></div>

<div class="b" style="left:701px;top:284px;width:176px;height:45px;box-sizing:border-box;border:4px solid #d01c2c"></div>

<div class="b" style="left:731px;top:833px;width:251px;height:0;border-top:1px dotted #222"></div>
<div class="c" style="left:857px;top:831px;font-size:12px;color:#222;background:#fff;padding:0 1px">分页符</div>
<div class="c m" style="left:988px;top:827px">↵</div>

<svg class="i" style="left:1210px;top:780px" width="240" height="230" viewBox="1210 780 240 230">
<circle cx="1327" cy="893" r="101" fill="none" stroke="#d9455e" stroke-width="5"/>
<circle cx="1327" cy="893" r="98" fill="none" stroke="#e57c8c" stroke-width="1.500" stroke-dasharray="3 2"/>
<path d="M1327 862l7.500 22.800 24 0-19.400 14.100 7.400 22.800-19.500-14.100-19.400 14.100 7.400-22.800-19.400-14.100 24 0z" fill="#d9455e"/>
<g fill="#d9455e" font-size="31" text-anchor="middle" font-family="'Noto Serif CJK SC',serif">
<text transform="translate(1276,926) rotate(-123)">朝</text>
<text transform="translate(1266,890) rotate(-87)">阳</text>
<text transform="translate(1272,867) rotate(-65)">泽</text>
<text transform="translate(1289,845) rotate(-38)">利</text>
<text transform="translate(1313,834) rotate(-13)">食</text>
<text transform="translate(1341,834) rotate(13)">品</text>
<text transform="translate(1366,846) rotate(40)">有</text>
<text transform="translate(1384,872) rotate(70)">限</text>
<text transform="translate(1388,893) rotate(90)">公</text>
<text transform="translate(1379,925) rotate(122)">司</text>
</g>
<path id="st" d="M1254 947A90 90 0 0 0 1400 947" fill="none"/>
<text font-size="9" fill="#d9455e" font-family="'Liberation Sans',sans-serif" letter-spacing="1.600"><textPath href="#st">21132400000000</textPath></text>
</svg>

<div class="b" style="left:700px;top:971px;width:30px;height:1px;background:#aaa"></div>
<div class="b" style="left:730px;top:971px;width:1px;height:31px;background:#aaa"></div>
<div class="b" style="left:1519px;top:971px;width:30px;height:1px;background:#aaa"></div>
<div class="b" style="left:1519px;top:971px;width:1px;height:31px;background:#aaa"></div>
<div class="t" style="left:1114px;top:998px;font-size:17px;color:#888;font-family:'Liberation Serif',serif;letter-spacing:-1.500px">154<span style="font-size:13px;font-family:'DejaVu Sans'">↵</span></div>
<div class="b" style="left:1712px;top:701px;width:10px;height:4px;background:#d8182a"></div>

<!-- status bar -->
<div class="b" style="left:0;top:1016px;width:1918px;height:22px;background:#f1f1f1;border-top:1px solid #c8c8c8;box-sizing:border-box"></div>
<div class="t" style="left:10px;top:1028px;color:#444;font-size:12px">第 154 页，共 338 页</div>
<div class="t" style="left:147px;top:1028px;color:#444;font-size:12px">103769 个字</div>
<svg class="i" style="left:236px;top:1020px" width="15" height="14" viewBox="0 0 15 14"><path d="M7 1L1 .5v12l6 .5zM7 1l3-.5V5M7 13l3-.5" fill="none" stroke="#666"/><path d="M10 7l4 4M14 7l-4 4" stroke="#666" fill="none"/></svg>
<div class="t" style="left:268px;top:1028px;color:#444;font-size:12px">简体中文(中国大陆)</div>
<div class="t" style="left:390px;top:1028px;color:#444;font-size:12px">修订: 关闭</div>
<svg class="i" style="left:465px;top:1019px" width="13" height="18" viewBox="0 0 13 18"><path d="M2 1l5 8 4 7M2 16l5-5M6 5l5 1" fill="none" stroke="#555" stroke-width="1.400"/><circle cx="6" cy="5" r="4" fill="none" stroke="#888"/></svg>
<div class="t" style="left:481px;top:1028px;color:#444;font-size:12px">辅助功能: 调查</div>
<svg class="i" style="left:1761px;top:1020px" width="14" height="16" viewBox="0 0 14 16"><path d="M.5 1.500l6 1 6-1v12l-6 1-6-1zM6.500 2.500v12M2 5h3M2 8h3M2 11h3M8 5h3M8 8h3M8 11h3" fill="none" stroke="#555"/></svg>
<div class="b" style="left:1789px;top:1017px;width:40px;height:21px;background:#c6c6c6"></div>
<svg class="i" style="left:1802px;top:1019px" width="14" height="17" viewBox="0 0 14 17"><path d="M.5.500h13v16H.5zM3 3h8M3 6h8M3 9h8M3 12h8" fill="none" stroke="#444"/></svg>
<svg class="i" style="left:1841px;top:1019px" width="14" height="17" viewBox="0 0 14 17"><path d="M.5.500h10v16H.5zM2.500 3h6M2.500 6h6M2.500 9h3" fill="none" stroke="#555"/><circle cx="10" cy="11" r="3.500" fill="#888"/></svg>
<div class="t" style="left:1878px;top:1028px;color:#444;font-size:12px">130%</div>

<!-- Taskbars -->
<div class="b" style="left:0;top:1038px;width:1918px;height:37px;background:linear-gradient(90deg,#27333b 0%,#27343b 60%,#2c2c2b 78%,#1f2b33 100%)"></div>
<div class="b" style="left:1918px;top:1038px;width:1909px;height:37px;background:linear-gradient(90deg,#27333b 0%,#27343b 62%,#2c2c2b 78%,#1f2b33 100%)"></div>
<div class="b" style="left:538px;top:1038px;width:48px;height:37px;background:#a76833"></div>
<div class="b" style="left:1077px;top:1038px;width:48px;height:37px;background:#505c63"></div>
<div class="b" style="left:2458px;top:1038px;width:48px;height:37px;background:#a76833"></div>
<div class="b" style="left:2997px;top:1038px;width:48px;height:37px;background:#505c63"></div>

<svg class="i" style="left:10px;top:1046px" width="24" height="24"><use href="#win"/></svg>
<svg class="i" style="left:58px;top:1046px" width="24" height="24"><use href="#sr"/></svg>
<svg class="i" style="left:109px;top:1046px" width="24" height="24"><use href="#calc"/></svg>
<svg class="i" style="left:158px;top:1046px" width="24" height="24"><use href="#whl"/></svg>
<svg class="i" style="left:206px;top:1046px" width="24" height="24"><use href="#pho"/></svg>
<svg class="i" style="left:256px;top:1046px" width="24" height="24"><use href="#dts"/></svg>
<svg class="i" style="left:305px;top:1046px" width="24" height="24"><use href="#tdo"/></svg>
<svg class="i" style="left:354px;top:1046px" width="24" height="24"><use href="#rng"/></svg>
<svg class="i" style="left:403px;top:1046px" width="24" height="24"><use href="#swr"/></svg>
<svg class="i" style="left:452px;top:1046px" width="24" height="24"><use href="#nss"/></svg>
<svg class="i" style="left:500px;top:1046px" width="24" height="24"><use href="#cup"/></svg>
<svg class="i" style="left:550px;top:1046px" width="24" height="24"><use href="#wx"/></svg>
<svg class="i" style="left:599px;top:1046px" width="24" height="24"><use href="#pen"/></svg>
<svg class="i" style="left:648px;top:1046px" width="24" height="24"><use href="#ps"/></svg><div class="c" style="left:660px;top:1058px;font-size:12px;color:#31c5f4;font-weight:bold">Ps</div>
<svg class="i" style="left:697px;top:1046px" width="24" height="24"><use href="#qq"/></svg>
<svg class="i" style="left:746px;top:1046px" width="24" height="24"><use href="#xin"/></svg><div class="c" style="left:758px;top:1057px;font-size:11px;color:#2a7cc0;font-style:italic">xin</div>
<svg class="i" style="left:795px;top:1046px" width="24" height="24"><use href="#cht"/></svg>
<svg class="i" style="left:844px;top:1046px" width="24" height="24"><use href="#adb"/></svg>
<svg class="i" style="left:893px;top:1046px" width="24" height="24"><use href="#blq"/></svg>
<svg class="i" style="left:942px;top:1046px" width="24" height="24"><use href="#xl"/></svg><div class="c" style="left:950px;top:1058px;font-size:10px;color:#fff;font-weight:bold">X</div>
<svg class="i" style="left:990px;top:1046px" width="24" height="24"><use href="#wd"/></svg><div class="c" style="left:998px;top:1058px;font-size:10px;color:#fff;font-weight:bold">W</div>
<svg class="i" style="left:1039px;top:1046px" width="24" height="24"><use href="#ntp"/></svg>
<svg class="i" style="left:1089px;top:1046px" width="24" height="24"><use href="#ylw"/></svg>
<div class="c w" style="left:1877px;top:1049px;font-size:13px">10:32</div>
<div class="c w" style="left:1878px;top:1067px;font-size:13px">2025-08-15</div>

<svg class="i" style="left:1931px;top:1046px" width="24" height="24"><use href="#win"/></svg>
<svg class="i" style="left:1979px;top:1046px" width="24" height="24"><use href="#sr"/></svg>
<svg class="i" style="left:2028px;top:1046px" width="24" height="24"><use href="#calc"/></svg>
<svg class="i" style="left:2077px;top:1046px" width="24" height="24"><use href="#whl"/></svg>
<svg class="i" style="left:2127px;top:1046px" width="24" height="24"><use href="#pho"/></svg>
<svg class="i" style="left:2177px;top:1046px" width="24" height="24"><use href="#dts"/></svg>
<svg class="i" style="left:2225px;top:1046px" width="24" height="24"><use href="#tdo"/></svg>
<svg class="i" style="left:2275px;top:1046px" width="24" height="24"><use href="#rng"/></svg>
<svg class="i" style="left:2324px;top:1046px" width="24" height="24"><use href="#swr"/></svg>
<svg class="i" style="left:2373px;top:1046px" width="24" height="24"><use href="#nss"/></svg>
<svg class="i" style="left:2422px;top:1046px" width="24" height="24"><use href="#cup"/></svg>
<svg class="i" style="left:2470px;top:1046px" width="24" height="24"><use href="#wx"/></svg>
<svg class="i" style="left:2519px;top:1046px" width="24" height="24"><use href="#pen"/></svg>
<svg class="i" style="left:2568px;top:1046px" width="24" height="24"><use href="#ps"/></svg><div class="c" style="left:2580px;top:1058px;font-size:12px;color:#31c5f4;font-weight:bold">Ps</div>
<svg class="i" style="left:2617px;top:1046px" width="24" height="24"><use href="#qq"/></svg>
<svg class="i" style="left:2666px;top:1046px" width="24" height="24"><use href="#xin"/></svg><div class="c" style="left:2678px;top:1057px;font-size:11px;color:#2a7cc0;font-style:italic">xin</div>
<svg class="i" style="left:2715px;top:1046px" width="24" height="24"><use href="#cht"/></svg>
<svg class="i" style="left:2764px;top:1046px" width="24" height="24"><use href="#adb"/></svg>
<svg class="i" style="left:2813px;top:1046px" width="24" height="24"><use href="#blq"/></svg>
<svg class="i" style="left:2860px;top:1046px" width="24" height="24"><use href="#xl"/></svg><div class="c" style="left:2868px;top:1058px;font-size:10px;color:#fff;font-weight:bold">X</div>
<svg class="i" style="left:2907px;top:1046px" width="24" height="24"><use href="#wd"/></svg><div class="c" style="left:2915px;top:1058px;font-size:10px;color:#fff;font-weight:bold">W</div>
<svg class="i" style="left:2960px;top:1046px" width="24" height="24"><use href="#ntp"/></svg>
<svg class="i" style="left:3009px;top:1046px" width="24" height="24"><use href="#ylw"/></svg>
<div class="c w" style="left:3797px;top:1049px;font-size:13px">10:32</div>
<div class="t w" style="left:3764px;top:1067px;font-size:13px">2025-08-15</div>

<!-- BROWSER chrome -->
<div class="b" style="left:1918px;top:0;width:1909px;height:38px;background:linear-gradient(90deg,#e4edfc 0%,#e6ecfb 70%,#f3e8f3 100%)"></div>
<div class="b" style="left:1927px;top:12px;width:21px;height:14px;background:#d5dae3;border-radius:3px"></div>
<div class="b" style="left:1937px;top:12px;width:11px;height:14px;background:#fff;border-radius:2px"></div>
<div class="b" style="left:1940px;top:18px;width:5px;height:1.500px;background:#555"></div>
<div class="tsep" style="left:1959px"></div>
<div class="tab" style="left:1966px;top:18px;font-size:12.500px">标签管理</div>
<svg class="i" style="left:2024px;top:16px" width="5" height="4"><use href="#dnb"/></svg>
<div class="tsep" style="left:2039px"></div>
<svg class="i" style="left:2054px;top:10px" width="14" height="16"><use href="#dfly"/></svg>
<div class="tab" style="left:2074px;top:19px">文本差异对比 - 蜻蜓在线工具</div>
<div class="tsep" style="left:2264px"></div>
<svg class="i" style="left:2279px;top:10px" width="14" height="16"><use href="#shd"/></svg>
<div class="tab" style="left:2301px;top:19px">朝阳泽利食品有限公司-启信宝</div>
<div class="tsep" style="left:2491px"></div>
<svg class="i" style="left:2505px;top:10px" width="16" height="16"><use href="#ccc"/></svg>
<div class="tab" style="left:2526px;top:19px">全国认证认可信息公共服务平台</div>
<div class="b" style="left:2721px;top:2px;width:221px;height:32px;background:#fff;border-radius:4px"></div>
<svg class="i" style="left:2731px;top:10px" width="15" height="16"><use href="#gbi"/></svg>
<div class="tab" style="left:2753px;top:19px;width:163px;overflow:hidden;height:14px;padding-top:1px">工标网-查询 【GB/T1355 198</div>
<svg class="i" style="left:2920px;top:14px" width="9" height="9" viewBox="0 0 9 9"><path d="M.5.500l8 8M8.500.500l-8 8" stroke="#555" fill="none"/></svg>
<svg class="i" style="left:2958px;top:11px" width="15" height="14"><use href="#dsk"/></svg>
<div class="tab" style="left:2979px;top:19px">Word表格插入图片不变形方法 -</div>
<div class="tsep" style="left:3170px"></div>
<svg class="i" style="left:3185px;top:10px" width="14" height="16"><use href="#dbi"/></svg>
<div class="tab" style="left:3206px;top:19px">设置表格图片大小 - 豆包</div>
<div class="tsep" style="left:3397px"></div>
<svg class="i" style="left:3412px;top:10px" width="14" height="16"><use href="#shd"/></svg>
<div class="tab" style="left:3433px;top:19px">山东梨花面业有限公司-启信宝</div>
<div class="tsep" style="left:3623px"></div>
<svg class="i" style="left:3648px;top:12px" width="13" height="13" viewBox="0 0 13 13"><path d="M6.500 0v13M0 6.500h13" stroke="#444" stroke-width="1.500"/></svg>
<div class="b" style="left:3736px;top:17px;width:10px;height:1px;background:#555"></div>
<svg class="i" style="left:3776px;top:13px" width="10" height="11" viewBox="0 0 10 11"><path d="M.5 2.500h7v8h-7zM2.500 2V.5h7v8H8" fill="none" stroke="#555"/></svg>
<svg class="i" style="left:3816px;top:13px" width="10" height="11" viewBox="0 0 10 11"><path d="M.5.500l9 10M9.500.500l-9 10" fill="none" stroke="#555"/></svg>

<!-- toolbar row -->
<svg class="i" style="left:1933px;top:50px" width="12" height="17" viewBox="0 0 12 17"><path d="M2 1l5 7.500L2 16M7 1l4 7.500L7 16" fill="none" stroke="#555"/></svg>
<svg class="i" style="left:1970px;top:50px" width="15" height="15" viewBox="0 0 15 15"><path d="M14 7.500H1M7 1L1 7.500 7 14" fill="none" stroke="#555"/></svg>
<svg class="i" style="left:2006px;top:50px" width="15" height="15" viewBox="0 0 15 15"><path d="M1 7.500h13M8 1l6 6.500L8 14" fill="none" stroke="#bbb"/></svg>
<svg class="i" style="left:2042px;top:50px" width="15" height="16" viewBox="0 0 15 16"><path d="M13 2.500v5h-5M13 7a6.500 6.500 0 1 0 .5 3" fill="none" stroke="#555" stroke-width="1.300"/></svg>
<svg class="i" style="left:2078px;top:50px" width="16" height="16" viewBox="0 0 16 16"><path d="M2 7l6-6 6 6v8H2z" fill="none" stroke="#555" stroke-width="1.300"/></svg>
<svg class="i" style="left:2114px;top:50px" width="15" height="15" viewBox="0 0 15 15"><circle cx="7.500" cy="7.500" r="6.500" fill="none" stroke="#555" stroke-width="1.300"/><path d="M7.500 3.500v4l3 1.500" fill="none" stroke="#555" stroke-width="1.300"/></svg>
<svg class="i" style="left:2133px;top:57px" width="5" height="4"><use href="#dnb"/></svg>
<div class="b" style="left:2159px;top:43px;width:1495px;height:30px;background:#f5f5f7;border-radius:8px"></div>
<svg class="i" style="left:2167px;top:50px" width="15" height="15" viewBox="0 0 15 15"><circle cx="6.500" cy="6.500" r="5.500" fill="none" stroke="#aaa" stroke-width="1.300"/><path d="M10.500 10.500L14 14" stroke="#aaa" stroke-width="1.300"/></svg>
<div class="t" id="url" style="left:2189px;top:59px;font-size:14.900px;color:#555;width:1255px;overflow:hidden;height:20px;line-height:20px">www.csres.com/s.jsp?keyword=GB%2FT1355+1986&amp;submit12=%B1%EA%D7%BC%CB%D1%CB%F7&amp;xx=on&amp;wss=on&amp;zf=on&amp;fz=on&amp;pageSize=25&amp;pageNum=1&amp;SortIndex=1&amp;WayIndex=</div>
<svg class="i" style="left:3484px;top:50px" width="16" height="17" viewBox="0 0 16 17"><circle cx="7" cy="7" r="6" fill="none" stroke="#555" stroke-width="1.300"/><path d="M11 11.500l4 4.500M7 4v6M4 7h6" stroke="#555" stroke-width="1.300" fill="none"/></svg>
<div class="t" style="left:3505px;top:58px;font-size:12px;color:#555">110%</div>
<svg class="i" style="left:3552px;top:50px" width="14" height="16" viewBox="0 0 14 16"><path d="M9 0L1 9h5l-2 7 9-10H8z" fill="#555"/></svg>
<svg class="i" style="left:3588px;top:50px" width="16" height="16" viewBox="0 0 16 16"><path d="M9 1l6 7-6 7v-4c-3 0-5 1-7 4 0-5 3-8 7-8z" fill="none" stroke="#555" stroke-width="1.300"/></svg>
<svg class="i" style="left:3623px;top:50px" width="16" height="16" viewBox="0 0 16 16"><path d="M8 1l2.200 4.700 5 .6-3.700 3.500 1 5L8 12.300l-4.500 2.500 1-5L.8 6.300l5-.6z" fill="none" stroke="#555" stroke-width="1.300"/></svg>
<svg class="i" style="left:3672px;top:50px" width="16" height="16" viewBox="0 0 16 16"><path d="M2 4h4V1.500a2 2 0 0 1 4 0V4h4v11H2v-4a2 2 0 0 0 0-4z" fill="none" stroke="#555" stroke-width="1.300"/></svg>
<svg class="i" style="left:3710px;top:51px" width="14" height="13" viewBox="0 0 14 13"><path d="M0 1h14M0 6.500h14M0 12h14" stroke="#555" stroke-width="1.300"/></svg>
<svg class="i" style="left:3746px;top:50px" width="14" height="16" viewBox="0 0 14 16"><circle cx="7" cy="4.500" r="3.500" fill="none" stroke="#555" stroke-width="1.300"/><path d="M1 15.500c0-4 2.500-7 6-7s6 3 6 7z" fill="none" stroke="#555" stroke-width="1.300"/></svg>
<div class="b" style="left:3781px;top:44px;width:47px;height:28px;background:#1a93f0;border-radius:50%"></div>
<div class="b" style="left:3796px;top:53px;width:18px;height:12px;background:#fff;border-radius:8px"></div>
<div class="b" style="left:3804px;top:56px;width:2px;height:6px;background:#1a93f0"></div>

<!-- bookmarks -->
<svg class="i" style="left:1929px;top:89px" width="16" height="16"><use href="#yst"/></svg>
<div class="bm" style="left:1948px;top:97px">全部书签</div>
<svg class="i" style="left:2016px;top:89px" width="13" height="16"><use href="#ybk"/></svg>
<div class="bm" style="left:2038px;top:97px">常用书签</div>
<div class="b" style="left:2099px;top:90px;width:1px;height:13px;background:#d8d8d8"></div>
<svg class="i" style="left:2110px;top:89px" width="16" height="16"><use href="#fld"/></svg>
<div class="bm" style="left:2134px;top:97px">从 IE 中导入</div>
<svg class="i" style="left:2214px;top:89px" width="14" height="16"><use href="#bdu"/></svg>
<div class="bm" style="left:2235px;top:97px">百度</div>
<svg class="i" style="left:2272px;top:89px" width="14" height="16"><use href="#dfly"/></svg>
<div class="bm" style="left:2292px;top:97px;width:96px">文本差异对比 - 蜻蜓</div>
<svg class="i" style="left:2403px;top:89px" width="14" height="16"><use href="#shd"/></svg>
<div class="bm" style="left:2423px;top:97px;width:97px">启信宝-企业查询_专</div>
<svg class="i" style="left:2535px;top:89px" width="16" height="16"><use href="#ccc"/></svg>
<div class="bm" style="left:2556px;top:97px;width:96px">全国认证认可信息</div>
<svg class="i" style="left:2667px;top:89px" width="16" height="16"><use href="#gbi"/></svg>
<div class="bm" style="left:2688px;top:97px">查标准上工标网</div>
<svg class="i" style="left:2784px;top:89px" width="16" height="16"><use href="#gq"/></svg>
<div class="bm" style="left:2805px;top:97px;width:95px">国家税务总局全国</div>
<svg class="i" style="left:2916px;top:89px" width="16" height="16"><use href="#zp"/></svg>
<div class="bm" style="left:2937px;top:97px">智谱清言</div>
<svg class="i" style="left:2999px;top:89px" width="14" height="16"><use href="#dbi"/></svg>
<div class="bm" style="left:3018px;top:97px;width:97px">豆包 - 字节跳动旗下</div>
<svg class="i" style="left:3130px;top:88px" width="16" height="18"><use href="#jm"/></svg>
<div class="bm" style="left:3152px;top:97px;width:95px">即梦AI - 一站式AI</div>
<svg class="i" style="left:3262px;top:89px" width="16" height="15"><use href="#dsk"/></svg>
<div class="bm" style="left:3284px;top:97px;width:96px">DeepSeek - 探索</div>
<div class="b" style="left:3395px;top:88px;width:16px;height:18px;background:#3dc3b6;color:#fff;text-align:center;line-height:18px;font-size:14px">B</div>
<div class="bm" style="left:3416px;top:97px">BOSS直聘</div>
<svg class="i" style="left:3484px;top:89px" width="16" height="16"><use href="#glb"/></svg>
<div class="bm" style="left:3505px;top:97px;width:97px">国家企业信用信息</div>
<svg class="i" style="left:3616px;top:89px" width="16" height="16"><use href="#emb"/></svg>
<div class="bm" style="left:3637px;top:97px;width:98px">信息公示-信用中国</div>
<svg class="i" style="left:3749px;top:89px" width="16" height="16"><use href="#emb"/></svg>
<div class="bm" style="left:3770px;top:97px;width:34px">中国裁判</div>
<svg class="i" style="left:3818px;top:91px" width="9" height="11" viewBox="0 0 9 11"><path d="M1 1l3 4.500L1 10M5 1l3 4.500L5 10" fill="none" stroke="#555"/></svg>
<div class="b" style="left:1918px;top:113px;width:1909px;height:1px;background:#e4e4e4"></div>

<!-- Site header -->
<svg class="i" style="left:1925px;top:115px" width="74" height="74" viewBox="0 0 74 74">
<path d="M38 1c-6 5-18 9-26 9v28c0 12 13 20 26 28z" fill="#1f5e9e"/>
<path d="M38 1c6 5 18 9 25 9v28c0 12-12 20-25 28z" fill="#b3292e"/>
<path d="M22 20h11v5H27v22h6v-14h-3v-5h8v26c-8-3-16-8-16-14z" fill="#fff"/>
<path d="M43 18h9c3 0 5 3 5 7s-2 6-3 7c2 1 3 3 3 7s-4 9-14 14zM48 23v7h3v-7zM48 36v8c3-1 4-3 4-5s-1-3-4-3z" fill="#fff"/>
<path d="M4 44C0 56 14 72 37 72S74 56 70 44c-2 12-16 20-33 20S6 56 4 44z" fill="#1f5e9e"/>
</svg>
<div class="t" style="left:2017px;top:149px;font-size:29px;color:#1b5e9b;font-weight:bold;letter-spacing:1px;font-family:'Liberation Serif','Noto Sans CJK SC',sans-serif">工标网</div>
<div class="t" style="left:2015px;top:172px;font-size:22px;color:#1b5e9b">csres.com</div>
<div class="nav" style="left:2205px;top:145px">标准分类</div>
<div class="nav" style="left:2276px;top:145px">最新标准</div>
<div class="t" style="left:2339px;top:139px;font-size:17px;color:#f00">New!</div>
<div class="nav" style="left:2387px;top:145px">标准公告</div>
<div class="nav" style="left:2453px;top:145px">标准动态</div>
<div class="nav" style="left:2524px;top:145px">标准论坛</div>
<div class="b" style="left:2205px;top:159px;width:400px;height:23px;box-sizing:border-box;border:1px solid #767676;border-radius:2px;background:#fff"></div>
<div class="b" style="left:2210px;top:163px;width:103px;height:16px;background:#c8c8c8"></div>
<div class="t" style="left:2210px;top:171px;font-size:14.600px;color:#333">GB/T1355 1986</div>
<div class="b" style="left:2609px;top:156px;width:75px;height:27px;box-sizing:border-box;border:1px solid #767676;border-radius:2px;background:#efefef"></div>
<div class="c" style="left:2647px;top:170px;font-size:15.400px;color:#111">标准搜索</div>
<div class="nav" style="left:2690px;top:170px;color:#0f3d91">高级查询</div>

<div class="nav" style="left:3643px;top:143px">帮助 | 登录 | 注册</div>
<div class="t" style="left:3605px;top:166px;font-size:21px;color:#e41e26;font-weight:bold;letter-spacing:6.300px;font-family:'Noto Serif CJK SC',serif;text-shadow:1px 2px 2px #bbb">查标准 上工标网！</div>

<!-- floating toolbar -->
<div class="b" style="left:2612px;top:115px;width:359px;height:42px;background:#fff;border-radius:7px;box-shadow:3px 10px 28px rgba(0,0,0,.13)"></div>
<svg class="i" style="left:2623px;top:128px" width="15" height="15" viewBox="0 0 15 15"><path d="M.8.800h9v11h-9z" fill="#fff" stroke="#333" stroke-width="1.300"/><path d="M4 13.500h9.500V4" fill="none" stroke="#333" stroke-width="1.300"/></svg>
<div class="t" style="left:2644px;top:136px;color:#333;font-size:13px">复制</div>
<svg class="i" style="left:2692px;top:127px" width="16" height="17" viewBox="0 0 16 17"><path d="M1 3h6v4H1zM4 1v8M9 2l1 2M14 2l-1 2M8 5h7M11.500 5v4M1 16l3-5 3 5M2 14h4M9 11h5M11.500 11v5" fill="none" stroke="#333" stroke-width="1.100"/></svg>
<div class="t" style="left:2714px;top:136px;color:#333;font-size:13px">AI翻译</div>
<svg class="i" style="left:2774px;top:128px" width="15" height="15" viewBox="0 0 15 15"><path d="M1 14V1h13v13zM4 11l3-7 3 2-4 5z" fill="none" stroke="#333" stroke-width="1.200"/></svg>
<div class="t" style="left:2794px;top:136px;color:#333;font-size:13px">记笔记</div>
<svg class="i" style="left:2855px;top:128px" width="16" height="15" viewBox="0 0 16 15"><circle cx="7" cy="7" r="6" fill="none" stroke="#333" stroke-width="1.500"/><path d="M11 11l4 4" stroke="#333" stroke-width="1.500"/></svg>
<div class="t" style="left:2876px;top:136px;color:#333;font-size:13px">AI搜索</div>
<svg class="i" style="left:2936px;top:127px" width="14" height="16" viewBox="0 0 14 16"><path d="M7 1l6 3.500v7L7 15l-6-3.500v-7z" fill="none" stroke="#333" stroke-width="1.300"/><circle cx="7" cy="8" r="2.300" fill="none" stroke="#333" stroke-width="1.300"/></svg>
<svg class="i" style="left:2958px;top:134px" width="5" height="4"><use href="#dnb"/></svg>

<!-- blue bar & table -->
<div class="b" style="left:1918px;top:195px;width:1909px;height:30px;background:#1a6ec0;border-top:2px solid #1560ae;box-sizing:border-box"></div>
<div class="b" style="left:1918px;top:197px;width:1909px;height:1px;background:#4a97e6"></div>
<div class="t w" style="left:1924px;top:210px;font-size:14px">共找到1条相关标准, 作废1, 耗时0.275秒</div>
<div class="t w" style="left:3721px;top:210px;font-size:14px;font-weight:bold">收藏本站&nbsp;&nbsp;联系客服</div>
<div class="b" style="left:1918px;top:225px;width:1909px;height:3px;background:#333"></div>
<div class="b" style="left:1921px;top:228px;width:1906px;height:25px;background:#d6e5ff"></div>
<div class="b" style="left:1921px;top:253px;width:1906px;height:1px;background:#333"></div>
<div class="b" style="left:1921px;top:277px;width:1906px;height:3px;background:#333"></div>
<div class="b" style="left:1921px;top:228px;width:1px;height:49px;background:#333"></div>
<div class="b" style="left:2266px;top:228px;width:1px;height:49px;background:#333"></div>
<div class="b" style="left:3223px;top:228px;width:1px;height:49px;background:#333"></div>
<div class="b" style="left:3548px;top:228px;width:1px;height:49px;background:#333"></div>
<div class="b" style="left:3722px;top:228px;width:1px;height:49px;background:#333"></div>
<div class="th" style="left:2093px;top:241px">标准编号</div>
<div class="th" style="left:2744px;top:241px">标准名称</div>
<div class="th" style="left:3386px;top:241px">发布部门</div>
<div class="th" style="left:3635px;top:241px">实施日期</div>
<div class="th" style="left:3780px;top:241px">状态</div>
<div class="t" style="left:1926px;top:266px;color:#f00;font-size:16px">GB/T 1355-1986</div>
<div class="t" style="left:2271px;top:266px;color:#f00;font-size:15.400px">小麦粉</div>
<div class="td" style="left:3386px;top:266px">国家标准局</div>
<div class="td" style="left:3635px;top:266px">1987-04-01</div>
<div class="td" style="left:3780px;top:266px">作废</div>
<div class="t" style="left:1924px;top:295px;color:#111;font-size:15.400px">共有1条符合状态条件的标准，共1页</div>
<div class="cb" style="left:3585px">✓</div><div class="t" style="left:3602px;top:295px;font-size:15px;color:#111">现行</div>
<div class="cb" style="left:3642px">✓</div><div class="t" style="left:3660px;top:295px;font-size:15px;color:#0a9c0a">即将实施</div>
<div class="cb" style="left:3730px">✓</div><div class="t" style="left:3748px;top:295px;font-size:15px;color:#f00">作废</div>
<div class="cb" style="left:3789px">✓</div><div class="t" style="left:3806px;top:295px;font-size:15px;color:#f00">废止</div>

<div class="b" style="left:1900px;top:239px;width:525px;height:64px;box-sizing:border-box;border:4px solid #c8161e"></div>

<!-- footer -->
<div class="f" style="left:2737px;top:347px;color:#c814ef;font-weight:bold">购书咨询:0898-3137-2222/13876321121</div>
<div class="f" style="left:2706px;top:370px;color:#1a4a96"><b style="color:#666">QQ:</b>1197428036 992023608 <span style="color:#00c;text-decoration:underline;font-size:13.300px">有问题?&nbsp; 联系在线客服</span></div>
<div class="f" style="left:2586px;top:393px;color:#111">版权所有2005-2021 海南讯海科技有限公司 经营许可证编号:&nbsp; <span style="color:#1a4a96">琼ICP备09001676号-1</span></div>
<div class="f" style="left:2660px;top:416px;color:#1a3f96"><span style="color:#f00">付款方式</span> | 联系我们 | 关于我们 | 合作伙伴 | 收藏本站 | 使用条款</div>

</div></body></html>
